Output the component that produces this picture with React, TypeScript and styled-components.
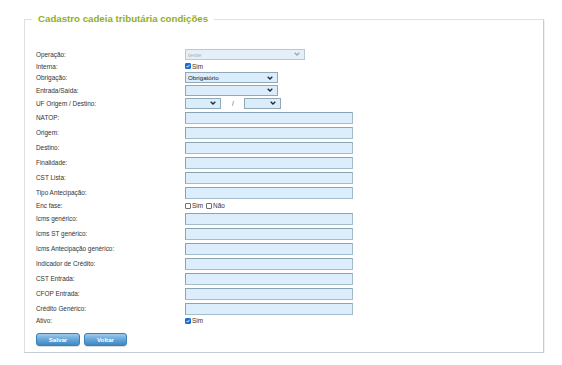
import React from "react";
import styled, { createGlobalStyle } from "styled-components";

const Global = createGlobalStyle`
  html, body { margin: 0; padding: 0; background: #fff; }
  body { font-family: "Liberation Sans", Arial, sans-serif; color: #333; }
`;

const Page = styled.div`
  padding: 13px 0 0 24px;
`;

const Fieldset = styled.fieldset`
  box-sizing: border-box;
  width: 520px;
  margin: 0;
  padding: 22px 0 6px 11px;
  border: 1px solid #dbe1e5;
  border-right-color: #c3ccd2;
  border-bottom-color: #c3ccd2;
  box-shadow: 1px 1px 0 #eef2f4;
`;

const Legend = styled.legend`
  margin-left: -4px;
  padding: 0 6px;
  font-size: 9.7px;
  line-height: 12px;
  font-weight: bold;
  color: #8fb025;
`;

const Row = styled.div<{ $h: number }>`
  display: grid;
  grid-template-columns: 149px 1fr;
  align-items: center;
  height: ${(p) => p.$h}px;
`;

const Label = styled.span`
  font-size: 6.4px;
  color: #333;
  white-space: nowrap;
`;

const Controls = styled.div`
  display: flex;
  align-items: center;
`;

const TextInput = styled.input`
  box-sizing: border-box;
  width: 168px;
  height: 12px;
  margin: 0;
  padding: 0 2px;
  background: #dcedfc;
  border: 1px solid #a3bccb;
  border-top-color: #8aa4b4;
  border-left-color: #8aa4b4;
  outline: none;
`;

const SelectBox = styled.div<{ $w: number; $disabled?: boolean }>`
  box-sizing: border-box;
  width: ${(p) => p.$w}px;
  height: 11px;
  padding: 0 4px 0 2px;
  display: flex;
  align-items: center;
  justify-content: space-between;
  background: ${(p) => (p.$disabled ? "#e4eff9" : "#dbecfb")};
  border: 1px solid ${(p) => (p.$disabled ? "#b6c9d6" : "#8fa9ba")};
  font-size: 6.2px;
  color: ${(p) => (p.$disabled ? "#a7b3bc" : "#222")};
`;

const Slash = styled.span`
  font-size: 6.4px;
  color: #555;
  margin: 0 10px 0 11px;
`;

const Box = styled.span<{ $checked?: boolean }>`
  box-sizing: border-box;
  display: inline-flex;
  align-items: center;
  justify-content: center;
  width: 6px;
  height: 6px;
  margin-right: 1px;
  border-radius: 1px;
  border: 1px solid ${(p) => (p.$checked ? "#1a6fd6" : "#6f6f6f")};
  background: ${(p) => (p.$checked ? "#1a6fd6" : "#fff")};
`;

const CheckText = styled.span`
  font-size: 6.4px;
  color: #333;
  margin-right: 3px;
`;

const Buttons = styled.div`
  display: flex;
  gap: 4px;
  margin-top: 8px;
`;

const Button = styled.button<{ $w: number }>`
  box-sizing: border-box;
  width: ${(p) => p.$w}px;
  height: 13px;
  padding: 0;
  border: 1px solid #3d7fb1;
  border-radius: 3px;
  background: linear-gradient(#9ccbee 0%, #6aa9da 45%, #3e89c5 100%);
  color: #fff;
  font-family: "Liberation Sans", Arial, sans-serif;
  font-weight: bold;
  font-size: 6.2px;
  box-shadow: 0 1px 1px rgba(0, 0, 0, 0.15);
`;

const Chevron = ({ color }: { color: string }) => (
  <svg width="6" height="4" viewBox="0 0 6 4">
    <path d="M0.7 0.7 L3 3 L5.3 0.7" fill="none" stroke={color} strokeWidth="1.3" />
  </svg>
);

const Select = ({ w, text, disabled }: { w: number; text?: string; disabled?: boolean }) => (
  <SelectBox $w={w} $disabled={disabled}>
    <span>{text ?? ""}</span>
    <Chevron color={disabled ? "#9aa8b3" : "#1c2a36"} />
  </SelectBox>
);

const CheckOption = ({ checked, text }: { checked?: boolean; text: string }) => (
  <>
    <Box $checked={checked} role="checkbox" aria-checked={!!checked}>
      {checked && (
        <svg width="4" height="4" viewBox="0 0 4 4">
          <path d="M0.5 2 L1.6 3.1 L3.5 0.8" fill="none" stroke="#fff" strokeWidth="0.9" />
        </svg>
      )}
    </Box>
    <CheckText>{text}</CheckText>
  </>
);

const inputRows1 = ["NATOP:", "Origem:", "Destino:", "Finalidade:", "CST Lista:", "Tipo Antecipação:"];
const inputRows2 = [
  "Icms genérico:",
  "Icms ST genérico:",
  "Icms Antecipação genérico:",
  "Indicador de Crédito:",
  "CST Entrada:",
  "CFOP Entrada:",
  "Crédito Genérico:",
];

export default function App() {
  return (
    <>
      <Global />
      <Page>
        <Fieldset>
          <Legend>Cadastro cadeia tributária condições</Legend>
          <Row $h={14}>
            <Label>Operação:</Label>
            <Controls>
              <Select w={120} text="teste" disabled />
            </Controls>
          </Row>
          <Row $h={10}>
            <Label>Interna:</Label>
            <Controls>
              <CheckOption checked text="Sim" />
            </Controls>
          </Row>
          <Row $h={13}>
            <Label>Obrigação:</Label>
            <Controls>
              <Select w={93} text="Obrigatório" />
            </Controls>
          </Row>
          <Row $h={12}>
            <Label>Entrada/Saída:</Label>
            <Controls>
              <Select w={93} />
            </Controls>
          </Row>
          <Row $h={14}>
            <Label>UF Origem / Destino:</Label>
            <Controls>
              <Select w={36} />
              <Slash>/</Slash>
              <Select w={37} />
            </Controls>
          </Row>
          {inputRows1.map((l) => (
            <Row $h={15} key={l}>
              <Label>{l}</Label>
              <Controls>
                <TextInput type="text" />
              </Controls>
            </Row>
          ))}
          <Row $h={11}>
            <Label>Enc fase:</Label>
            <Controls>
              <CheckOption text="Sim" />
              <CheckOption text="Não" />
            </Controls>
          </Row>
          {inputRows2.map((l) => (
            <Row $h={15} key={l}>
              <Label>{l}</Label>
              <Controls>
                <TextInput type="text" />
              </Controls>
            </Row>
          ))}
          <Row $h={9}>
            <Label>Ativo:</Label>
            <Controls>
              <CheckOption checked text="Sim" />
            </Controls>
          </Row>
          <Buttons>
            <Button $w={44}>Salvar</Button>
            <Button $w={43}>Voltar</Button>
          </Buttons>
        </Fieldset>
      </Page>
    </>
  );
}
